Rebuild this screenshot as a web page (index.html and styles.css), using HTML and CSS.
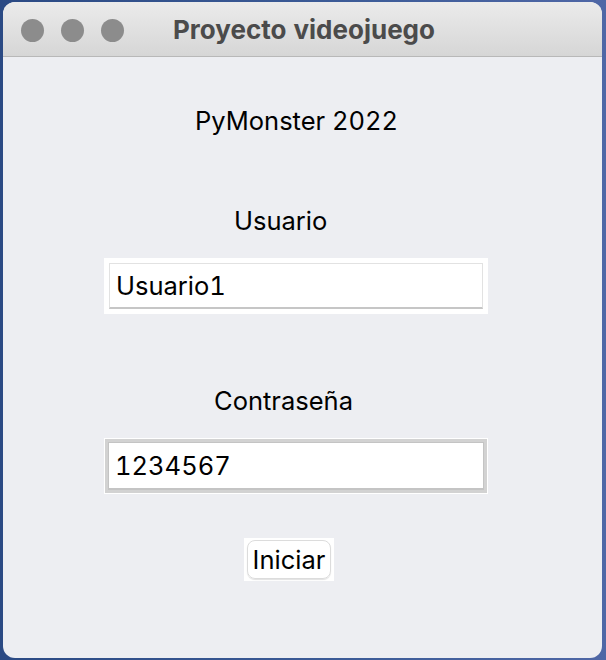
FILE: index.html
```html
<!DOCTYPE html>
<html lang="es">
<head>
<meta charset="utf-8">
<title>Proyecto videojuego</title>
<link rel="stylesheet" href="styles.css">
</head>
<body>
<div class="window">
  <div class="titlebar">
    <div class="lights">
      <span class="light"></span>
      <span class="light"></span>
      <span class="light"></span>
    </div>
    <div class="title">Proyecto videojuego</div>
  </div>
  <div class="content">
    <div class="heading">PyMonster 2022</div>
    <div class="label label-user">Usuario</div>
    <div class="field">
      <div class="entry">Usuario1</div>
    </div>
    <div class="label label-pass">Contraseña</div>
    <div class="field field-focus">
      <div class="ring">
        <div class="entry">1234567</div>
      </div>
    </div>
    <div class="btn-wrap">
      <div class="btn">Iniciar</div>
    </div>
  </div>
</div>
</body>
</html>
```

FILE: styles.css
```css
html, body {
  margin: 0;
  padding: 0;
}
body {
  width: 606px;
  height: 660px;
  background: linear-gradient(90deg, #2b4a84 0%, #3d5c98 60%, #4f67a6 100%);
  font-family: "Inter", "Noto Sans", sans-serif;
  color: #000;
  padding: 2px 4px 2px 3px;
  box-sizing: border-box;
  overflow: hidden;
  font-feature-settings: "tnum" 1;
}
.window {
  width: 599px;
  height: 656px;
  border-radius: 12px;
  overflow: hidden;
  background: #edeef2;
  display: flex;
  flex-direction: column;
}
.titlebar {
  height: 54px;
  border-bottom: 1px solid #b8b8b8;
  background: linear-gradient(#ebebeb, #d6d6d6);
  display: flex;
  align-items: center;
  padding-left: 18px;
  flex-shrink: 0;
}
.lights {
  display: flex;
  gap: 17px;
  margin-top: 2px;
}
.light {
  width: 23px;
  height: 23px;
  border-radius: 50%;
  background: #8c8c8c;
}
.title {
  margin-left: 49px;
  font-weight: 700;
  font-size: 26px;
  color: #4b4b4b;
}
.content {
  display: flex;
  flex-direction: column;
  align-items: flex-start;
  font-size: 25.5px;
}
.heading {
  line-height: 30px;
  margin-top: 49px;
  margin-left: 192px;
}
.label {
  line-height: 30px;
}
.label-user {
  margin-top: 70px;
  margin-left: 231px;
}
.label-pass {
  margin-top: 72px;
  margin-left: 211px;
}
.field {
  margin-top: 22px;
  margin-left: 101px;
  width: 384px;
  height: 56px;
  box-sizing: border-box;
  background: #fff;
  padding: 5px;
}
.field-focus {
  padding: 1px;
}
.ring {
  background: #d2d2d2;
  padding: 3px;
  height: 100%;
  box-sizing: border-box;
}
.entry {
  height: 46px;
  box-sizing: border-box;
  background: #fff;
  border: 1px solid #e2e2e2;
  border-bottom: 2px solid #c6c6c6;
  padding-left: 6px;
  display: flex;
  align-items: center;
  line-height: 30px;
}
.field-focus .entry {
  height: 100%;
  border: 1px solid #c4c4c4;
  border-bottom-width: 2px;
}
.btn-wrap {
  margin-top: 44px;
  margin-left: 241px;
  width: 90px;
  height: 43px;
  box-sizing: border-box;
  background: #fff;
  padding: 2px 3px;
}
.btn {
  height: 39px;
  box-sizing: border-box;
  border-radius: 8px;
  border: 1px solid #dcdcdc;
  box-shadow: 0 1px 1px rgba(0,0,0,0.12);
  display: flex;
  align-items: center;
  justify-content: center;
  line-height: 30px;
}
```
